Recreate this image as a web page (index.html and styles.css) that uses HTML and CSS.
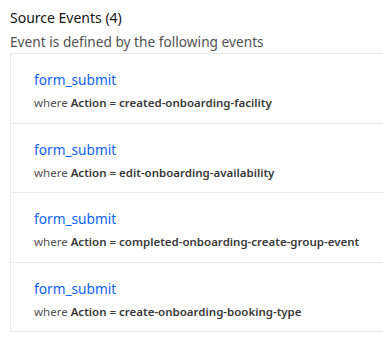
FILE: index.html
```html
<!DOCTYPE html>
<html>
<head>
<meta charset="utf-8">
<link rel="stylesheet" href="styles.css">
</head>
<body>
<div class="page">
  <div class="title">Source Events (4)</div>
  <div class="subtitle">Event is defined by the following events</div>
  <div class="list">
    <div class="row">
      <div class="name">form_submit</div>
      <div class="cond"><span class="where">where</span> <span class="prop">Action = created-onboarding-facility</span></div>
    </div>
    <div class="row">
      <div class="name">form_submit</div>
      <div class="cond"><span class="where">where</span> <span class="prop">Action = edit-onboarding-availability</span></div>
    </div>
    <div class="row">
      <div class="name">form_submit</div>
      <div class="cond"><span class="where">where</span> <span class="prop">Action = completed-onboarding-create-group-event</span></div>
    </div>
    <div class="row">
      <div class="name">form_submit</div>
      <div class="cond"><span class="where">where</span> <span class="prop">Action = create-onboarding-booking-type</span></div>
    </div>
  </div>
</div>
</body>
</html>
```
FILE: styles.css
```css
html, body {
  margin: 0;
  padding: 0;
  background: #ffffff;
  overflow: hidden;
}
.page {
  font-family: "Noto Sans", "Open Sans", sans-serif;
  padding: 8px 0 0 10px;
}
.title {
  font-size: 14px;
  line-height: 20px;
  color: #161616;
}
.subtitle {
  font-size: 13.7px;
  line-height: 22px;
  color: #525252;
  margin-top: 3px;
}
.list {
  margin-right: -4px;
  border: 1px solid #e8e8e8;
}
.row {
  padding: 16px 24px 11.5px 23px;
  border-top: 1px solid #e8e8e8;
}
.row:first-child {
  border-top: none;
}
.name {
  font-size: 13.7px;
  line-height: 20px;
  color: #0f62fe;
}
.cond {
  margin-top: 5px;
  font-size: 11.5px;
  line-height: 16px;
  white-space: nowrap;
}
.where {
  color: #525252;
}
.prop {
  color: #393939;
  font-weight: 600;
}
```
